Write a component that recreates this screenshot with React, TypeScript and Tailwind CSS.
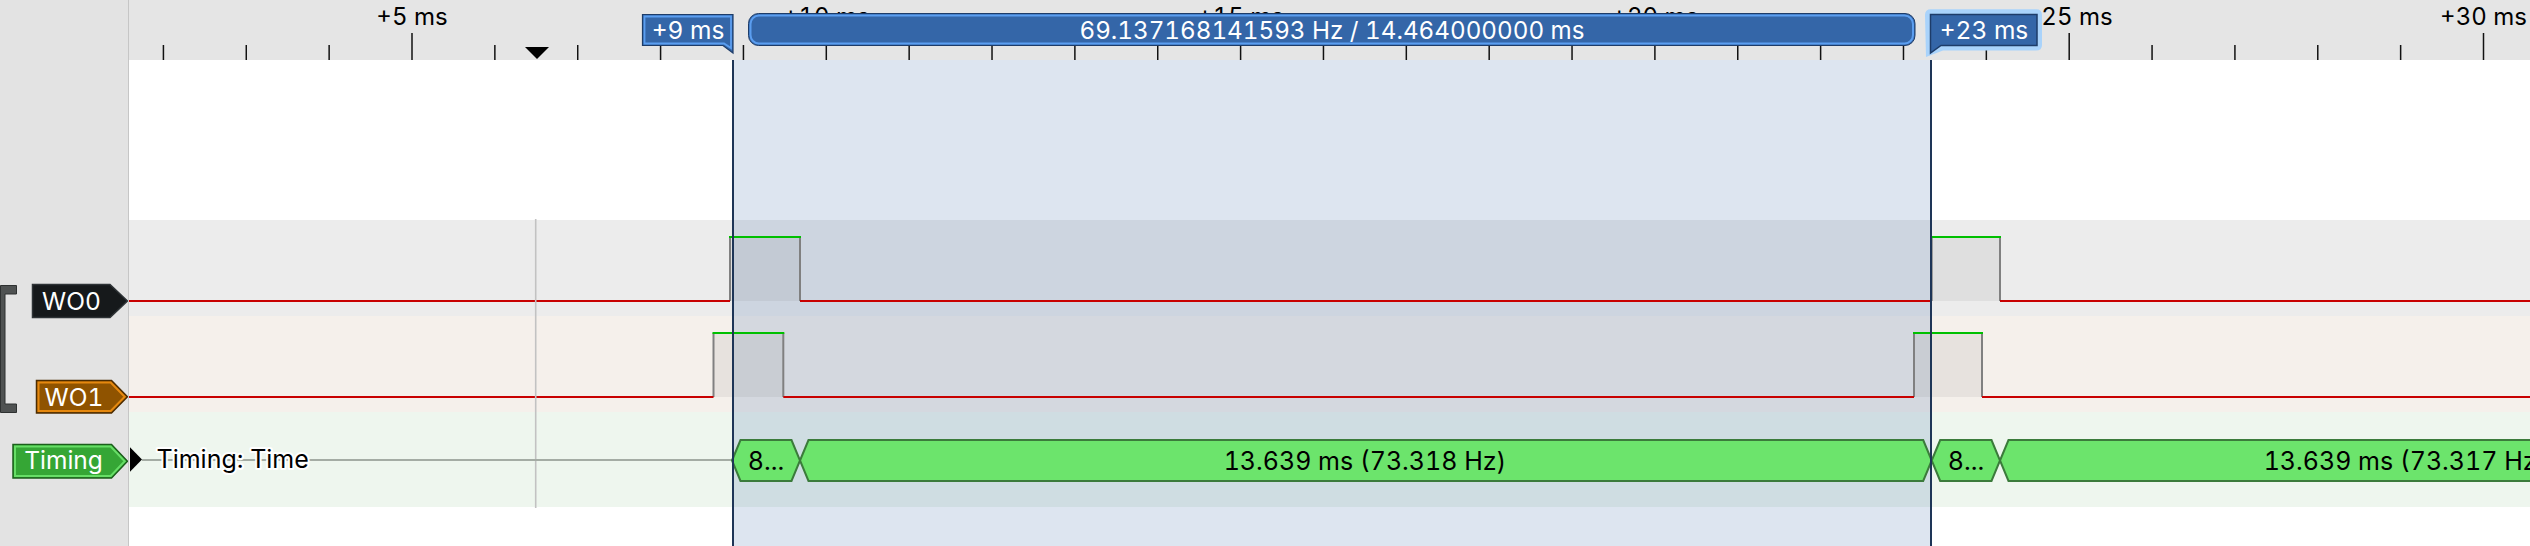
import React from "react";

const F = "Inter, 'Noto Sans', sans-serif";
const px = (ms: number) => -2.3 + 82.86 * ms;

function tagPath(x1: number, y1: number, x2: number, y2: number, ax: number, d = 0) {
  const cy = (y1 + y2) / 2;
  return `M${x1 + d},${y1 + d} H${ax - d * 0.4} L${x2 - d * 1.4},${cy} L${ax - d * 0.4},${y2 - d} H${x1 + d} Z`;
}

function Tag({
  x1, y1, x2, y2, ax, fill, outer, inner, label, tx, ty,
}: {
  x1: number; y1: number; x2: number; y2: number; ax: number;
  fill: string; outer: string; inner?: string; label: string; tx: number; ty: number;
}) {
  return (
    <g>
      <path d={tagPath(x1, y1, x2, y2, ax)} fill={fill} stroke={outer} strokeWidth={1.5} />
      {inner && <path d={tagPath(x1, y1, x2, y2, ax, 2)} fill="none" stroke={inner} strokeWidth={2} />}
      <text x={tx} y={ty} textAnchor="middle" fill="#fff" fontFamily={F} fontSize={24.5}>
        {label}
      </text>
    </g>
  );
}

function hexPts(x1: number, x2: number) {
  const t = 440, b = 481, m = 460.5, s = 8.5;
  return `${x1},${m} ${x1 + s},${t} ${x2 - s},${t} ${x2},${m} ${x2 - s},${b} ${x1 + s},${b}`;
}

function Pulse({ x1, x2, hi, lo }: { x1: number; x2: number; hi: number; lo: number }) {
  return (
    <g>
      <rect x={x1} y={hi} width={x2 - x1} height={lo - hi} fill="rgba(120,120,120,0.11)" />
      <line x1={x1} y1={hi} x2={x1} y2={lo} stroke="#808080" strokeWidth={2} />
      <line x1={x2} y1={hi} x2={x2} y2={lo} stroke="#808080" strokeWidth={2} />
      <line x1={x1 - 1} y1={hi} x2={x2 + 1} y2={hi} stroke="#00c000" strokeWidth={2} />
    </g>
  );
}

function Red({ segs, y }: { segs: [number, number][]; y: number }) {
  return (
    <g>
      {segs.map(([a, b], i) => (
        <line key={i} x1={a} y1={y} x2={b} y2={y} stroke="#c80000" strokeWidth={2.2} />
      ))}
    </g>
  );
}

export default function App() {
  const ticks: number[] = [];
  for (let n = 2; n <= 30; n++) ticks.push(n);

  const selA = 733;
  const selB = 1931;

  return (
    <div className="flex h-[546px] w-[2530px] overflow-hidden bg-white tabular-nums">
      <aside className="w-[129px] shrink-0 border-r border-[#c6c6c6] bg-[#e3e3e3]">
        <svg width={128} height={546} viewBox="0 0 128 546" className="tabular-nums">
          {/* bracket */}
          <path
            d="M0.5,285.5 H16.5 V294 H5 V404 H16.5 V412.5 H0.5 Z"
            fill="#4f5252"
            stroke="#2e3131"
            strokeWidth={1}
          />
          <Tag x1={32.5} y1={284.5} x2={127.5} y2={317.5} ax={110} fill="#16191b" outer="#2e3336"
            label="WO0" tx={71.5} ty={309.8} />
          <Tag x1={36.5} y1={380.5} x2={127.5} y2={413} ax={111.5} fill="#8f5300" outer="#4d2c00" inner="#e6880e"
            label="WO1" tx={74} ty={405.8} />
          <Tag x1={13} y1={444.5} x2={127.5} y2={478} ax={111.5} fill="#35a635" outer="#1b5f1b" inner="#66de66"
            label="Timing" tx={63.5} ty={469} />
        </svg>
      </aside>

      <main className="flex min-w-0 flex-1 flex-col">
        <header className="h-[60px] shrink-0 bg-[#e5e5e5]">
          <svg width={2401} height={60} viewBox="129 0 2401 60" className="tabular-nums">
            {ticks.map((n) => {
              const x = px(n);
              const major = n % 5 === 0;
              return (
                <line key={n} x1={x} y1={major ? 33 : 45} x2={x} y2={60} stroke="#111" strokeWidth={1.5} />
              );
            })}
            {[5, 10, 15, 20, 25, 30].map((n) => (
              <text key={n} x={px(n)} y={25} textAnchor="middle" fill="#000" fontFamily={F} fontSize={24}>
                {`+${n} ms`}
              </text>
            ))}
            {/* cursor marker */}
            <polygon points="525,47 549,47 537,59" fill="#000" />

            {/* measurement bar */}
            <rect x={748.5} y={13.5} width={1166.5} height={32} rx={10} fill="#3466a8" stroke="#1d3c69" strokeWidth={1} />
            <rect x={750.5} y={15.5} width={1162.5} height={28} rx={8.5} fill="none" stroke="#5b9ef0" strokeWidth={2} />
            <text x={1332} y={39} textAnchor="middle" fill="#fff" fontFamily={F} fontSize={24.2}>
              69.137168141593 Hz / 14.464000000 ms
            </text>

            {/* +9 ms flag */}
            <path d="M642.5,14.5 H733 V53 L723,45.5 H642.5 Z" fill="#3466a8" stroke="#1d3c69" strokeWidth={1.2} />
            <path d="M644.5,16.5 H731 V48 L724,43.5 H644.5 Z" fill="none" stroke="#5b9ef0" strokeWidth={1.8} />
            <text x={688} y={39.3} textAnchor="middle" fill="#fff" fontFamily={F} fontSize={24.5}>
              +9 ms
            </text>

            {/* +23 ms flag */}
            <path d="M1925,15 Q1925,9.3 1931,9.3 H2036 Q2042,9.3 2042,15 V45 Q2042,50.5 2036,50.5 H1943 L1926,57 Z" fill="#a9d3fb" />
            <path d="M1930.5,14.5 H2037 V45.5 H1941 L1930.5,53 Z" fill="#3466a8" stroke="#1d3c69" strokeWidth={1.5} />
            <text x={1984} y={39.3} textAnchor="middle" fill="#fff" fontFamily={F} fontSize={24.5}>
              +23 ms
            </text>
          </svg>
        </header>

        <div className="relative flex flex-1 flex-col bg-white">
          <div className="h-[160px]" />
          <div className="h-[96px] bg-[#ececec]" />
          <div className="h-[96px] bg-[#f5f0eb]" />
          <div className="h-[95px] bg-[#eef6ee]" />
          <div className="flex-1" />

          <svg className="absolute inset-0 tabular-nums" width={2401} height={486} viewBox="129 60 2401 486">
            {/* selection shade */}
            <rect x={selA} y={60} width={selB - selA} height={486} fill="rgba(52,101,164,0.17)" />

            {/* WO0 */}
            <Pulse x1={730} x2={800} hi={237} lo={301} />
            <Pulse x1={1931.7} x2={2000} hi={237} lo={301} />
            <Red y={301} segs={[[129, 730], [800, 1931.7], [2000, 2530]]} />

            {/* WO1 */}
            <Pulse x1={713.5} x2={783.3} hi={333} lo={397} />
            <Pulse x1={1914} x2={1982} hi={333} lo={397} />
            <Red y={397} segs={[[129, 713.5], [783.3, 1914], [1982, 2530]]} />

            {/* cursor line */}
            <line x1={535.7} y1={219} x2={535.7} y2={508} stroke="#c2c2c2" strokeWidth={1.6} />

            {/* Timing */}
            <line x1={142} y1={460} x2={733} y2={460} stroke="#a4aca4" strokeWidth={2} />
            <polygon points="130,447.3 142,459.5 130,471.7" fill="#000" />
            <text
              x={156.5}
              y={468}
              fill="#000"
              stroke="#fff"
              strokeWidth={4}
              paintOrder="stroke"
              strokeLinejoin="round"
              fontFamily={F}
              fontSize={25}
            >
              Timing: Time
            </text>

            {([
              [732, 800, "8...", 766],
              [800, 1931.7, "13.639 ms (73.318 Hz)", 1365],
              [1931.7, 2000, "8...", 1966],
              [2000, 3131, "13.639 ms (73.317 Hz)", 2405],
            ] as [number, number, string, number][]).map(([a, b, t, c], i) => (
              <g key={i}>
                <polygon points={hexPts(a, b)} fill="#6ce46c" stroke="#3b7b3b" strokeWidth={2} />
                <text x={c} y={469.5} textAnchor="middle" fill="#000" fontFamily={F} fontSize={25}>
                  {t}
                </text>
              </g>
            ))}

            {/* selection edges */}
            <line x1={selA} y1={60} x2={selA} y2={546} stroke="#1e3557" strokeWidth={2} />
            <line x1={selB} y1={60} x2={selB} y2={546} stroke="#1e3557" strokeWidth={2} />
          </svg>
        </div>
      </main>
    </div>
  );
}
